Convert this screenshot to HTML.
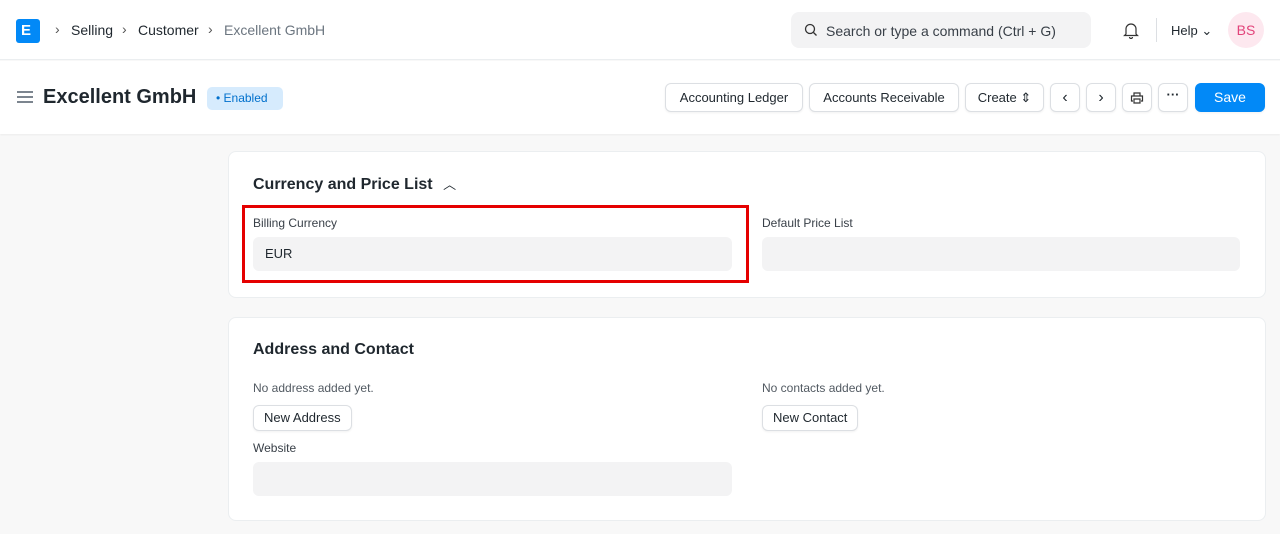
<!DOCTYPE html>
<html><head><style>
*{box-sizing:border-box;margin:0;padding:0}
body{width:1280px;height:534px;overflow:hidden;background:#f8f8f8;font-family:"Liberation Sans",sans-serif;color:#1f272e;font-size:13px;position:relative}
.abs{position:absolute}
.nav{left:0;top:0;width:1280px;height:60px;background:#fff;border-bottom:1px solid #ebeef0}
.head{left:0;top:61px;width:1280px;height:73px;background:#fff;box-shadow:0 1px 2px rgba(0,0,0,.05)}
.btn{position:absolute;top:83px;height:29px;border:1px solid #dcdfe3;border-radius:6px;background:#fff;font-size:13px;line-height:27px;text-align:center;color:#1f272e;box-shadow:0 1px 2px rgba(0,0,0,.06)}
.card{position:absolute;left:228px;width:1038px;background:#fff;border:1px solid #ebeef0;border-radius:8px}
.lbl{position:absolute;font-size:12px;color:#383f47}
.inp{position:absolute;height:34px;background:#f3f3f4;border-radius:6px;font-size:13px;line-height:34px;padding-left:12px}
.sb{position:absolute;height:26px;border:1px solid #dcdfe3;border-radius:6px;background:#fff;font-size:13px;line-height:24px;padding:0 10px;box-shadow:0 1px 2px rgba(0,0,0,.06)}
</style></head><body>
<div class="abs nav"></div>
<div class="abs" style="left:16px;top:19px;width:24px;height:24px;background:#0289f7;border-radius:3px"></div>
<div class="abs" style="left:21px;top:23px;color:#fff;font-weight:bold;font-size:15px;line-height:16px">E</div>
<div class="abs" style="left:55px;top:21px;font-size:14px;color:#555">›</div>
<div class="abs" style="left:71px;top:22px;font-size:14px">Selling</div>
<div class="abs" style="left:122px;top:21px;font-size:14px;color:#555">›</div>
<div class="abs" style="left:138px;top:22px;font-size:14px">Customer</div>
<div class="abs" style="left:208px;top:21px;font-size:14px;color:#555">›</div>
<div class="abs" style="left:224px;top:22px;font-size:14px;color:#6c7680">Excellent GmbH</div>
<div class="abs" style="left:791px;top:12px;width:300px;height:36px;background:#f3f3f4;border-radius:8px"></div>
<svg class="abs" style="left:804px;top:23px" width="14" height="14" viewBox="0 0 14 14"><circle cx="6" cy="6" r="4.5" fill="none" stroke="#333" stroke-width="1.3"/><path d="M9.5 9.5L12.5 12.5" stroke="#333" stroke-width="1.3"/></svg>
<div class="abs" style="left:826px;top:23px;font-size:14px;color:#383f47">Search or type a command (Ctrl + G)</div>
<svg class="abs" style="left:1123px;top:21px" width="16" height="18" viewBox="0 0 16 18"><path d="M3 13V8a5 5 0 0 1 10 0v5l1.5 1.5h-13zM6.5 16a1.5 1.5 0 0 0 3 0" fill="none" stroke="#333" stroke-width="1.2"/></svg>
<div class="abs" style="left:1156px;top:18px;width:1px;height:24px;background:#dcdfe3"></div>
<div class="abs" style="left:1171px;top:23px;font-size:13px">Help ⌄</div>
<div class="abs" style="left:1228px;top:12px;width:36px;height:36px;border-radius:50%;background:#fde8ef;color:#e2437a;font-size:14px;line-height:36px;text-align:center">BS</div>
<div class="abs head"></div>
<div class="abs" style="left:17px;top:91px;width:16px;height:2px;background:#7c858f;box-shadow:0 5px 0 #7c858f,0 10px 0 #7c858f"></div>
<div class="abs" style="left:43px;top:86px;font-size:20px;font-weight:bold">Excellent GmbH</div>
<div class="abs" style="left:207px;top:87px;width:76px;height:23px;background:#d6ebfd;border-radius:5px;color:#0070cc;font-size:12px;line-height:23px;padding-left:9px">• Enabled</div>
<div class="btn" style="left:665px;width:138px">Accounting Ledger</div>
<div class="btn" style="left:809px;width:150px">Accounts Receivable</div>
<div class="btn" style="left:965px;width:79px">Create ⇕</div>
<div class="btn" style="left:1050px;width:30px;font-size:16px">‹</div>
<div class="btn" style="left:1086px;width:30px;font-size:16px">›</div>
<div class="btn" style="left:1122px;width:30px"><svg width="14" height="14" viewBox="0 0 14 14" style="margin-top:7px"><path d="M4 5V2h6v3M3 10H1.5V5h11v5H11M4 8h6v4H4z" fill="none" stroke="#333" stroke-width="1.2"/></svg></div>
<div class="btn" style="left:1158px;width:30px;font-weight:bold;line-height:22px">···</div>
<div class="btn" style="left:1195px;width:70px;background:#0289f7;border-color:#0289f7;color:#fff;font-size:14px">Save</div>

<div class="card" style="top:151px;height:147px"></div>
<div class="abs" style="left:253px;top:174px;font-size:16px;font-weight:bold">Currency and Price List <span style="font-weight:normal;font-size:13px;margin-left:6px">︿</span></div>
<div class="abs" style="left:242px;top:205px;width:507px;height:78px;border:3px solid #e50000"></div>
<div class="lbl" style="left:253px;top:216px">Billing Currency</div>
<div class="inp" style="left:253px;top:237px;width:479px">EUR</div>
<div class="lbl" style="left:762px;top:216px">Default Price List</div>
<div class="inp" style="left:762px;top:237px;width:478px"></div>

<div class="card" style="top:317px;height:204px"></div>
<div class="abs" style="left:253px;top:341px;font-size:16px;font-weight:bold">Address and Contact</div>
<div class="lbl" style="left:253px;top:381px;color:#525a62">No address added yet.</div>
<div class="sb" style="left:253px;top:405px">New Address</div>
<div class="lbl" style="left:762px;top:381px;color:#525a62">No contacts added yet.</div>
<div class="sb" style="left:762px;top:405px">New Contact</div>
<div class="lbl" style="left:253px;top:441px">Website</div>
<div class="inp" style="left:253px;top:462px;width:479px"></div>
</body></html>
